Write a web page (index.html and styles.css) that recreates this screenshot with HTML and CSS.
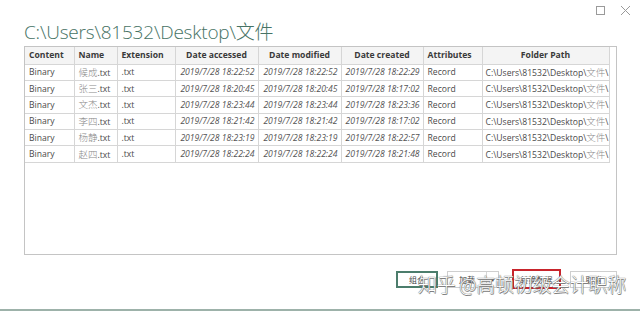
FILE: index.html
```html
<!DOCTYPE html>
<html lang="zh-CN">
<head>
<meta charset="utf-8">
<title>C:\Users\81532\Desktop\文件</title>
<link rel="stylesheet" href="styles.css">
</head>
<body>
<div class="window">
  <div class="topbar">
    <svg class="ctl" width="11" height="11" viewBox="0 0 11 11"><rect x="1.5" y="1.5" width="8" height="8" fill="none" stroke="#9a9a9a" stroke-width="1"/></svg>
    <svg class="ctl close" width="11" height="11" viewBox="0 0 11 11"><path d="M1 1 L10 10 M10 1 L1 10" stroke="#9a9a9a" stroke-width="1" fill="none"/></svg>
  </div>
  <div class="title">C:\Users\81532\Desktop\文件</div>
  <div class="frame">
    <table class="grid">
      <colgroup>
        <col class="c1"><col class="c2"><col class="c3"><col class="c4"><col class="c5"><col class="c6"><col class="c7"><col class="c8">
      </colgroup>
      <thead>
        <tr>
          <th>Content</th><th>Name</th><th>Extension</th><th class="ctr">Date accessed</th><th class="ctr">Date modified</th><th class="ctr">Date created</th><th>Attributes</th><th class="ctr">Folder Path</th>
        </tr>
      </thead>
      <tbody>
        <tr><td>Binary</td><td><span class="cn">候成</span>.txt</td><td>.txt</td><td class="dt">2019/7/28 18:22:52</td><td class="dt">2019/7/28 18:22:52</td><td class="dt">2019/7/28 18:22:29</td><td>Record</td><td class="path">C:\Users\81532\Desktop\<span class="cn">文件</span>\</td></tr>
        <tr><td>Binary</td><td><span class="cn">张三</span>.txt</td><td>.txt</td><td class="dt">2019/7/28 18:20:45</td><td class="dt">2019/7/28 18:20:45</td><td class="dt">2019/7/28 18:17:02</td><td>Record</td><td class="path">C:\Users\81532\Desktop\<span class="cn">文件</span>\</td></tr>
        <tr><td>Binary</td><td><span class="cn">文杰</span>.txt</td><td>.txt</td><td class="dt">2019/7/28 18:23:44</td><td class="dt">2019/7/28 18:23:44</td><td class="dt">2019/7/28 18:23:36</td><td>Record</td><td class="path">C:\Users\81532\Desktop\<span class="cn">文件</span>\</td></tr>
        <tr><td>Binary</td><td><span class="cn">李四</span>.txt</td><td>.txt</td><td class="dt">2019/7/28 18:21:42</td><td class="dt">2019/7/28 18:21:42</td><td class="dt">2019/7/28 18:17:02</td><td>Record</td><td class="path">C:\Users\81532\Desktop\<span class="cn">文件</span>\</td></tr>
        <tr><td>Binary</td><td><span class="cn">杨静</span>.txt</td><td>.txt</td><td class="dt">2019/7/28 18:23:19</td><td class="dt">2019/7/28 18:23:19</td><td class="dt">2019/7/28 18:22:57</td><td>Record</td><td class="path">C:\Users\81532\Desktop\<span class="cn">文件</span>\</td></tr>
        <tr><td>Binary</td><td><span class="cn">赵四</span>.txt</td><td>.txt</td><td class="dt">2019/7/28 18:22:24</td><td class="dt">2019/7/28 18:22:24</td><td class="dt">2019/7/28 18:21:48</td><td>Record</td><td class="path">C:\Users\81532\Desktop\<span class="cn">文件</span>\</td></tr>
      </tbody>
    </table>
  </div>
  <div class="buttons">
    <div class="btn primary">组合</div>
    <div class="btn split"><span class="lbl">加载</span><span class="arrow">▾</span></div>
    <div class="btn marked">转换数据</div>
    <div class="btn">取消</div>
  </div>
  <div class="bottomline"></div>
  <div class="watermark">知乎 @高顿初级会计职称</div>
</div>
</body>
</html>
```

FILE: styles.css
```css
* { box-sizing: border-box; }
html, body { margin: 0; padding: 0; background: #fff; }
body { width: 640px; height: 311px; overflow: hidden; font-family: "Open Sans", "Noto Sans", "Noto Sans CJK SC", sans-serif; }

.window { position: relative; width: 640px; height: 311px; display: flex; flex-direction: column; }

.topbar { height: 20px; display: flex; justify-content: flex-end; align-items: flex-start; padding-top: 5px; padding-right: 9px; gap: 14px; }
.ctl { display: block; }

.title {
  margin-left: 24px;
  height: 26px;
  font-family: "Open Sans", "Noto Sans CJK SC", sans-serif;
  font-weight: 300;
  font-size: 19px;
  line-height: 25px;
  color: #477365;
  letter-spacing: -0.2px;
  white-space: nowrap;
}

.frame {
  margin-left: 24px;
  width: 593px;
  height: 209px;
  border: 1px solid #c4c4c4;
  background: #fff;
}

.grid {
  border-collapse: collapse;
  table-layout: fixed;
  width: 584px;
  font-size: 8.6px;
  color: #4a4a4a;
}
.c1 { width: 49px; } .c2 { width: 43px; } .c3 { width: 58px; } .c4 { width: 83px; }
.c5 { width: 83px; } .c6 { width: 82px; } .c7 { width: 59px; } .c8 { width: 127px; }

.grid th, .grid td {
  border: 1px solid #d6d6d6;
  padding: 0 4px;
  text-align: left;
  white-space: nowrap;
  overflow: hidden;
  line-height: 14px;
}
.grid th { height: 17px; font-weight: 700; color: #3a3a3a; background: #f4f4f4; }
.grid tbody tr { height: 16.4px; }
.grid tr > *:first-child { border-left: none; }
.grid thead th { border-top: none; }
.grid .ctr { text-align: center; }
.grid .dt { font-style: italic; text-align: right; padding-right: 3px; color: #555; }
.grid .path { text-overflow: clip; padding-left: 3px; }
.cn { font-family: "Noto Sans CJK SC", sans-serif; font-weight: 300; color: #8a8a8a; font-size: 9.5px; }

.buttons {
  margin-top: 14px;
  display: flex;
  align-items: center;
  justify-content: flex-end;
  padding-right: 23px;
  gap: 9px;
  height: 20px;
}
.btn {
  height: 17px;
  border: 1px solid #cfcfcf;
  font-size: 8px;
  color: #444;
  display: flex;
  align-items: center;
  justify-content: center;
  background: #fff;
  font-family: "Noto Sans CJK SC", sans-serif;
}
.btn.primary { width: 42px; border: 2px solid #4c7d6c; }
.btn.split { width: 52px; justify-content: flex-start; padding: 0; margin-right: 4px; }
.btn.split .lbl { width: 40px; text-align: center; border-right: 1px solid #d6d6d6; height: 100%; display: flex; align-items: center; justify-content: center; }
.btn.split .arrow { width: 11px; text-align: center; font-size: 7px; }
.btn.marked { width: 49px; height: 20px; border: 2px solid #c8242c; }
.btn:last-child { width: 47px; }

.bottomline { margin-top: auto; height: 2px; background: #9db2aa; }

.watermark {
  position: absolute;
  left: 418px;
  top: 273px;
  font-family: "Noto Sans CJK SC", sans-serif;
  font-weight: 300;
  font-size: 19px;
  line-height: 22px;
  letter-spacing: -0.3px;
  color: #fff;
  white-space: nowrap;
  text-shadow: 0 0 1px #666, 0 0 1px #666, 0.5px 0.5px 0 #888;
}
```
